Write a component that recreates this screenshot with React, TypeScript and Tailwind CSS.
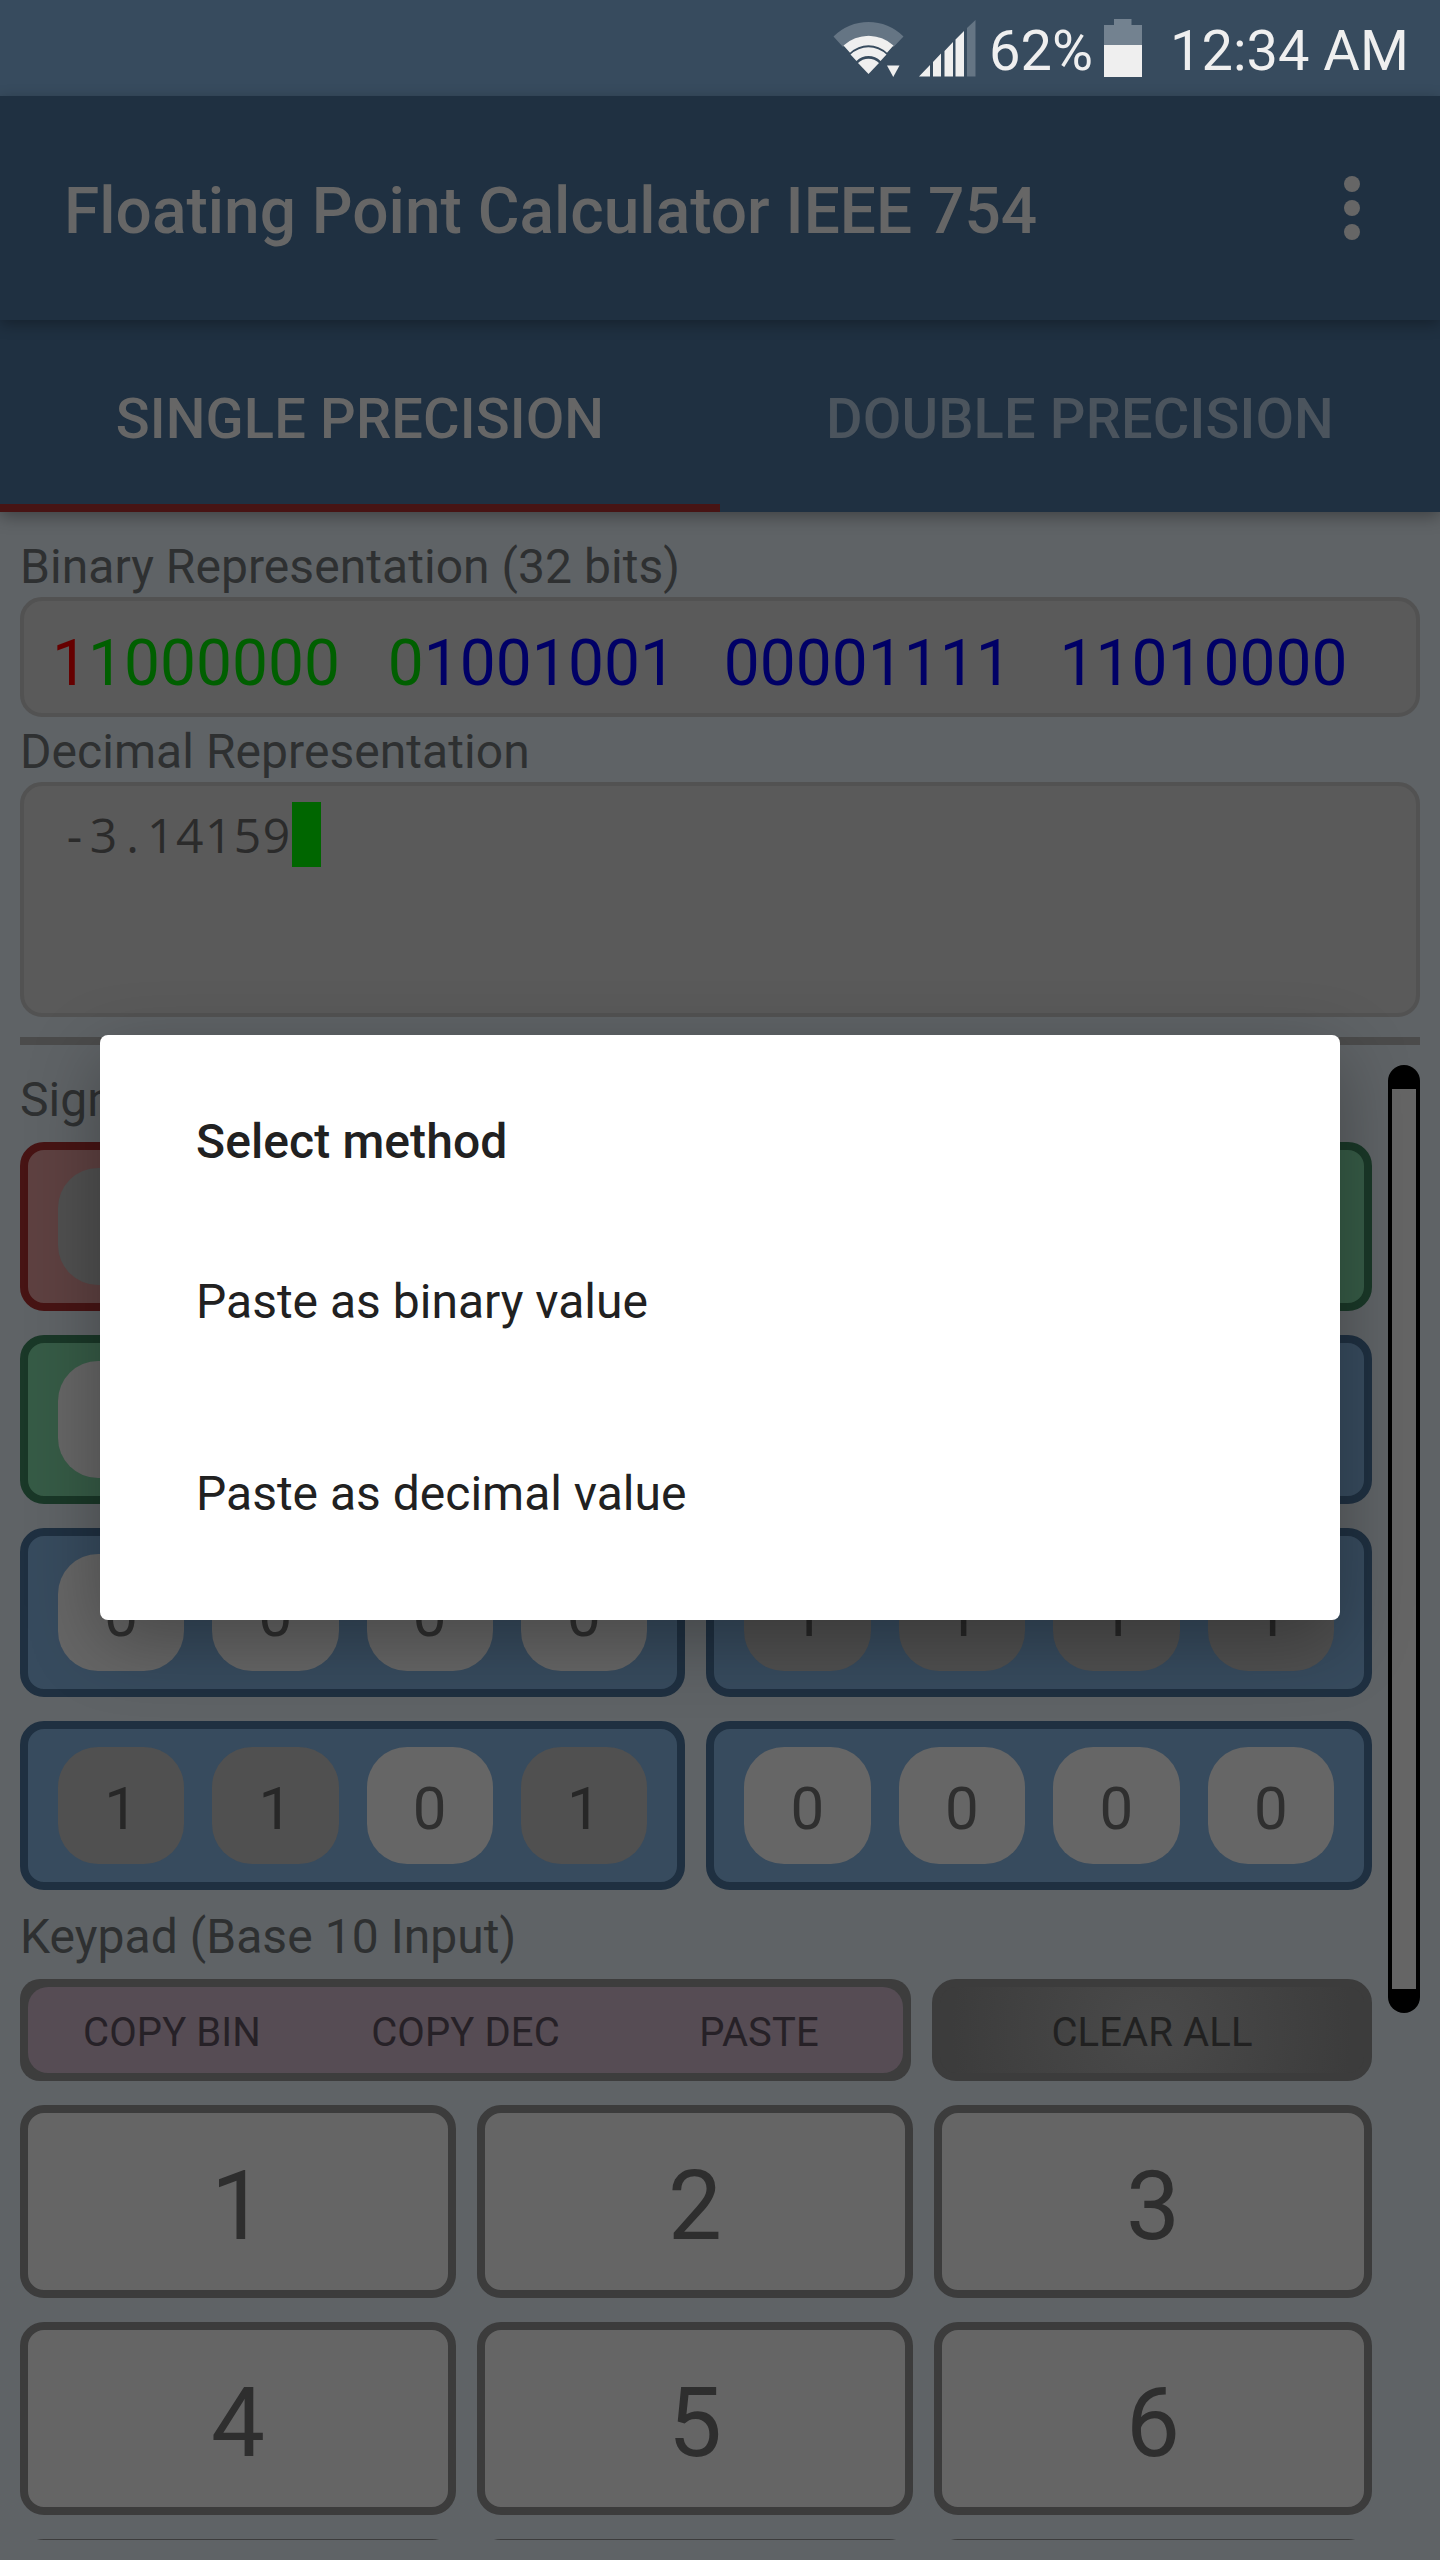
type Tone = "red" | "green" | "blue";

const TONES: Record<Tone, string> = {
  red: "border-[#471414] bg-[#5e4141]",
  green: "border-[#1a3828] bg-[#365b46]",
  blue: "border-[#1f3041] bg-[#374b5e]",
};

function StatusBar() {
  return (
    <div className="flex h-24 items-center bg-[#374b5e] pl-[833px] text-[#efefef]">
      <svg className="-mt-px h-[58px] w-[72px] shrink-0" viewBox="0 0 72 58">
        <path d="M0.500 17.500 A49.500 49.500 0 0 1 70.500 17.500 L60.500 28 A34 34 0 0 0 10 28 Z" fill="#657584" />
        <g fill="#efefef">
          <path d="M10.500 26.500 A37 37 0 0 1 60.500 26.500 L54 33.700 A26.500 26.500 0 0 0 17 33.700 Z" />
          <path d="M17.500 35.500 A26 26 0 0 1 53.500 35.500 L47.500 42 A17 17 0 0 0 23.500 42 Z" />
          <path d="M25 44 A15 15 0 0 1 46 44 L35.500 55 Z" />
          <path d="M54 46.500 H66.500 L60.250 58 Z" />
        </g>
      </svg>
      <svg className="ml-3.5 h-[57px] w-[57px] shrink-0" viewBox="0 0 57 57">
        <path d="M0 56.500 L11 45 V56.500 Z M14 42 L22 33.500 V56.500 H14 Z M25.500 31 L34 22 V56.500 H25.500 Z M36.500 19.500 L45 11 V56.500 H36.500 Z" fill="#efefef" />
        <path d="M48 8 L56.500 0 V56.500 H48 Z" fill="#657584" />
      </svg>
      <span className="mt-[5px] ml-[13px] w-[104px] text-[56px] leading-none">62%</span>
      <svg className="ml-[11px] h-[58px] w-[38px] shrink-0" viewBox="0 0 38 58">
        <path d="M0 6 H10 V0 H27.500 V6 H38 V26 H0 Z" fill="#738290" />
        <path d="M0 26 H38 V58 H0 Z" fill="#efefef" />
      </svg>
      <span className="mt-[5px] ml-7 text-[56px] leading-none whitespace-nowrap">12:34 AM</span>
    </div>
  );
}

function Label({ children, className }: { children: string; className: string }) {
  return (
    <div className={`h-[61px] text-[48px] leading-[61px] tracking-[0.05px] whitespace-nowrap text-[#2e3031] ${className}`}>
      {children}
    </div>
  );
}

function Nibble({ tone, bits }: { tone: Tone; bits: string }) {
  return (
    <div className={`flex h-[169px] min-w-0 gap-7 rounded-[24px] border-8 px-[30px] py-[18px] ${TONES[tone]}`}>
      {bits.split("").map((bit, i) => (
        <div
          key={i}
          className={`flex flex-1 items-center justify-center rounded-[40px] pt-1.5 text-[60px] leading-none ${
            bit === "1" ? "bg-[#505050] text-[#272727]" : "bg-[#666666] text-[#2f2f2f]"
          }`}
        >
          {bit}
        </div>
      ))}
    </div>
  );
}

function BitGrid() {
  return (
    <div className="flex flex-col gap-6">
      <div className="grid grid-cols-[202px_1fr] gap-[21px]">
        <Nibble tone="red" bits="1" />
        <Nibble tone="green" bits="1000000" />
      </div>
      <div className="grid grid-cols-[202px_1fr] gap-[21px]">
        <Nibble tone="green" bits="0" />
        <Nibble tone="blue" bits="1001001" />
      </div>
      <div className="grid grid-cols-[665px_666px] gap-[21px]">
        <Nibble tone="blue" bits="0000" />
        <Nibble tone="blue" bits="1111" />
      </div>
      <div className="grid grid-cols-[665px_666px] gap-[21px]">
        <Nibble tone="blue" bits="1101" />
        <Nibble tone="blue" bits="0000" />
      </div>
    </div>
  );
}

function Keypad() {
  return (
    <>
      <div className="flex h-[102px] gap-[21px] text-[40px] leading-none tracking-[0.1px]">
        <div className="w-[891px] rounded-[20px] bg-[#3d3d3d] p-2 text-[#262127]">
          <div className="grid h-full grid-cols-[288px_1fr_288px] items-center rounded-[20px] bg-[#564c54] pt-[5px] text-center">
            <span>COPY BIN</span>
            <span>COPY DEC</span>
            <span>PASTE</span>
          </div>
        </div>
        <div className="flex flex-1 items-center justify-center rounded-[24px] border-8 border-[#3c3c3c] bg-[radial-gradient(circle_200px_at_center,#4a4a4a,#3c3c3c)] pt-[5px] text-[#212121]">
          CLEAR ALL
        </div>
      </div>
      <div className="mt-6 grid grid-cols-[436px_436px_438px] gap-x-[21px] gap-y-6">
        {["1", "2", "3", "4", "5", "6", "", "", ""].map((n, i) => (
          <div
            key={i}
            className="flex h-[193px] items-center justify-center rounded-[24px] border-8 border-[#3c3c3c] bg-[#656565] pt-2 text-[96px] leading-none text-[#2e2e2e]"
          >
            {n}
          </div>
        ))}
      </div>
    </>
  );
}

export default function App() {
  return (
    <div className="relative h-[2560px] w-[1440px] overflow-hidden bg-[#5f6366] font-['Roboto',sans-serif]">
      <StatusBar />
      <header className="relative z-20 flex h-56 items-center justify-between bg-[#1f3041] pr-20 pl-16 shadow-[0_4px_14px_rgba(0,0,0,0.3)]">
        <h1 className="mt-[7px] text-[64px] leading-none font-medium whitespace-nowrap text-[#666666]">
          Floating Point Calculator IEEE 754
        </h1>
        <div className="flex flex-col gap-2">
          <i className="size-4 rounded-full bg-[#666666]" />
          <i className="size-4 rounded-full bg-[#666666]" />
          <i className="size-4 rounded-full bg-[#666666]" />
        </div>
      </header>
      <nav className="relative z-10 grid h-48 grid-cols-2 bg-[#1f3041] text-center text-[56px] leading-[198px] font-medium tracking-[0.12px] shadow-[0_4px_16px_rgba(0,0,0,0.35)]">
        <div className="h-48 border-b-8 border-[#471414] text-[#666666]">SINGLE PRECISION</div>
        <div className="h-48 text-[#4b545d]">DOUBLE PRECISION</div>
      </nav>

      <main className="flex h-[2028px] flex-col overflow-hidden px-5 pt-6">
        <Label className="shrink-0">Binary Representation (32 bits)</Label>
        <div className="h-[120px] shrink-0 rounded-[22px] border-4 border-[#525252] bg-[#5a5a5a] pl-7 text-[64px] leading-[126px] tracking-[0.04px] whitespace-pre text-[#000066]">
          <span className="text-[#660000]">1</span>
          <span className="text-[#005f00]">{"1000000   0"}</span>
          {"1001001   00001111   11010000"}
        </div>
        <Label className="mt-1 shrink-0">Decimal Representation</Label>
        <div className="flex h-[235px] shrink-0 items-start rounded-[22px] border-4 border-[#525252] bg-[#5a5a5a] pt-4 pl-9 font-['Open_Sans',sans-serif] text-[48px] leading-[65px] text-[#2b2b2b]">
          <span className="w-[29px] text-center">-</span>
          <span className="w-[29px] text-center">3</span>
          <span className="w-[29px] text-center">.</span>
          <span className="w-[145px] tracking-[1.5px]">14159</span>
          <span className="h-[65px] w-[29px] bg-[#006600]" />
        </div>
        <div className="mt-5 h-2 shrink-0 bg-[#4b4b4b]" />

        <div className="mt-5 flex shrink-0 items-start gap-4">
          <div className="w-[1352px]">
            <Label className="mt-1 mb-3">Sign, Exponent and Mantissa</Label>
            <BitGrid />
            <Label className="mt-4 mb-3">Keypad (Base 10 Input)</Label>
            <Keypad />
          </div>
          <div className="h-[948px] w-8 rounded-2xl bg-black px-1 py-6">
            <div className="h-full bg-[#656565]" />
          </div>
        </div>
      </main>

      <div className="absolute top-[1035px] left-[100px] z-30 h-[585px] w-[1240px] rounded-lg bg-white pl-24 text-[48px] text-[#212121] shadow-[0_22px_72px_rgba(0,0,0,0.3)]">
        <h2 className="mt-[76px] leading-[62px] font-medium tracking-[0.1px]">Select method</h2>
        <p className="mt-[98px] leading-[62px]">Paste as binary value</p>
        <p className="mt-[130px] leading-[62px]">Paste as decimal value</p>
      </div>
    </div>
  );
}
